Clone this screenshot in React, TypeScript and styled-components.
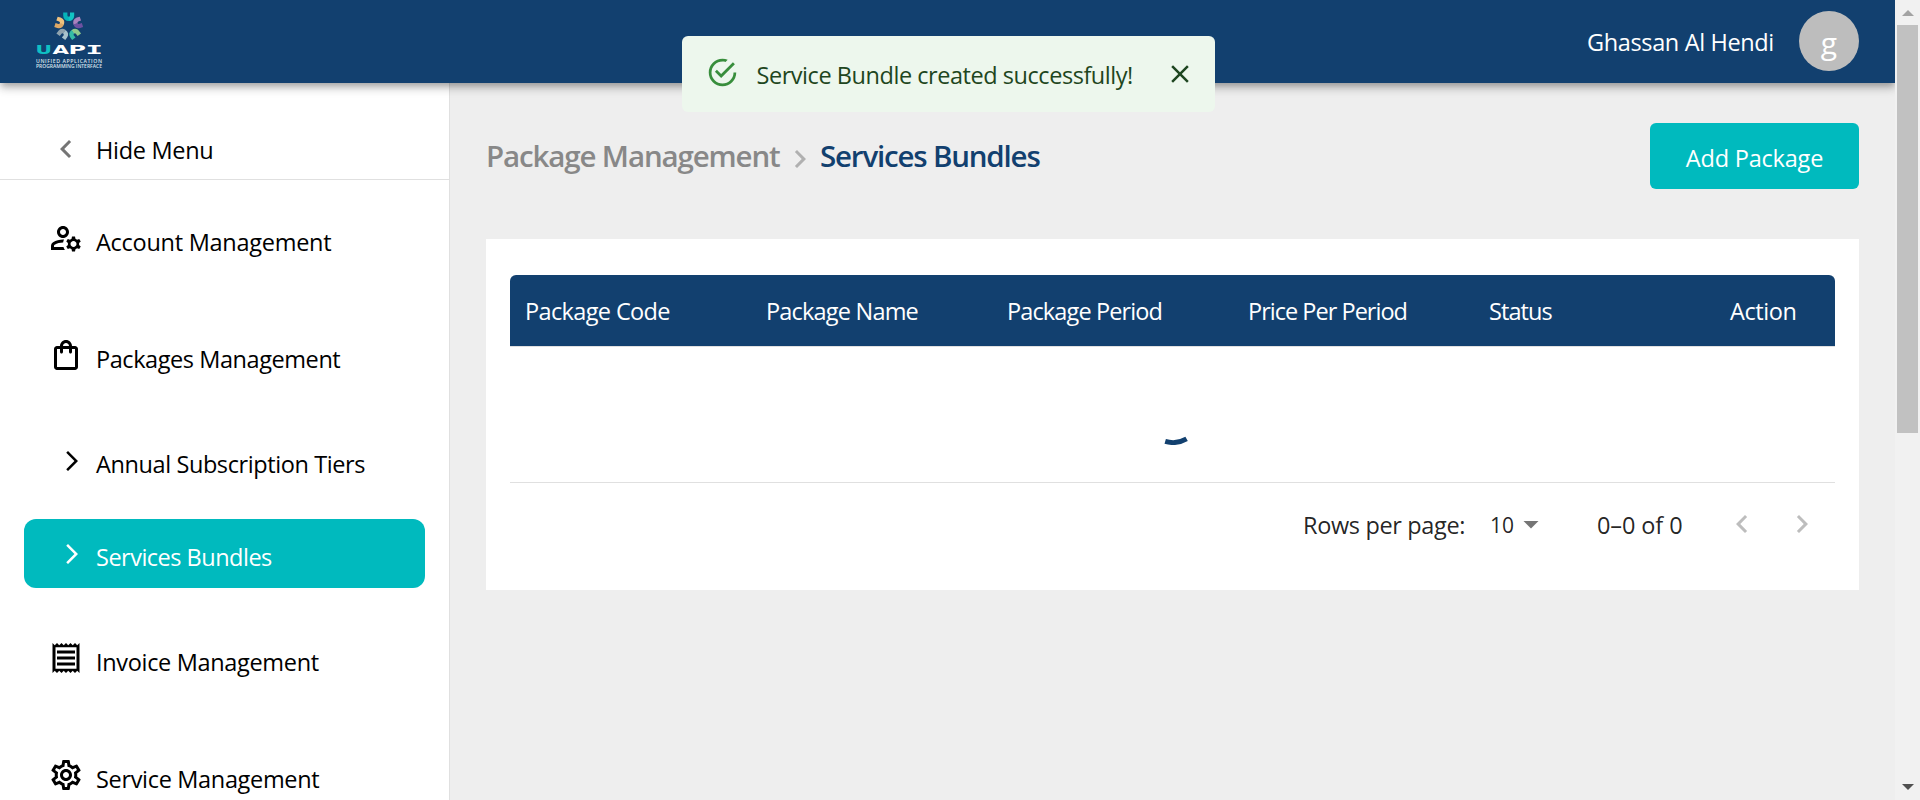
import React from "react";
import styled, { createGlobalStyle, css } from "styled-components";
import {
  MdChevronLeft,
  MdChevronRight,
  MdArrowForwardIos,
  MdArrowDropDown,
  MdClose,
  MdOutlineManageAccounts,
  MdOutlineShoppingBag,
  MdOutlineReceipt,
  MdOutlineSettings,
} from "react-icons/md";

const navy = "#12406f";
const teal = "#00babe";

const GlobalStyle = createGlobalStyle`
  *, *::before, *::after { box-sizing: border-box; }
  html, body { margin: 0; padding: 0; overflow: hidden; }
  body {
    font-family: "Open Sans", "Noto Sans", sans-serif;
    font-size: 23.5px;
    color: #000;
    background: #eee;
  }
  svg { display: block; flex: none; }
`;

const Label = styled.span<{ $track?: number }>`
  white-space: nowrap;
  letter-spacing: ${(p) => p.$track ?? -0.3}px;
`;

const Screen = styled.div`
  display: flex;
  width: 1920px;
  height: 800px;
  overflow: hidden;
`;

const Page = styled.div`
  position: relative;
  display: flex;
  flex-direction: column;
  width: 1895px;
  overflow: hidden;
`;

const Header = styled.header`
  position: relative;
  z-index: 1;
  display: flex;
  align-items: center;
  flex: none;
  height: 83px;
  padding: 0 36px 1px 35px;
  color: #fff;
  background: ${navy};
  box-shadow: 0 3px 6px -1.5px rgba(0, 0, 0, 0.2),
    0 6px 7.5px rgba(0, 0, 0, 0.14), 0 1.5px 15px rgba(0, 0, 0, 0.12);
`;

const UserBlock = styled.div`
  display: flex;
  align-items: center;
  margin-left: auto;
  width: 272px;
  justify-content: space-between;
`;

const UserName = styled(Label)`
  line-height: 34px;
  padding-top: 2px;
`;

const Avatar = styled.div`
  display: flex;
  align-items: center;
  justify-content: center;
  width: 60px;
  height: 60px;
  padding-top: 3px;
  border-radius: 50%;
  font-size: 30px;
  line-height: 45px;
  background: #bdbdbd;
`;

const Body = styled.div`
  display: flex;
  flex: 1;
  min-height: 0;
`;

const Sidebar = styled.nav`
  flex: none;
  width: 450px;
  overflow: hidden;
  background: #fff;
  border-right: 1px solid #e0e0e0;
`;

const HideMenu = styled.div`
  display: flex;
  align-items: center;
  height: 97px;
  padding: 36px 0 0 48px;
  border-bottom: 1px solid #e0e0e0;
  margin-bottom: 23px;

  svg { color: #757575; margin-right: 12px; }
  span { padding-top: 1px; }
`;

const NavItem = styled.div<{ $gap: number; $sub?: boolean; $active?: boolean }>`
  display: flex;
  align-items: center;
  height: 69px;
  margin: 0 24px ${(p) => p.$gap}px;
  padding-left: 24px;
  border-radius: 12px;

  svg {
    width: 36px;
    height: 36px;
    margin-right: 12px;
  }
  span { padding-top: 9px; }

  ${(p) =>
    p.$sub &&
    css`
      padding-left: 36px;
      svg { width: 24px; height: 24px; }
      span { padding-top: 7px; }
    `}
  ${(p) =>
    p.$active &&
    css`
      color: #fff;
      background: ${teal};
    `}
`;

const Main = styled.main`
  flex: 1;
  padding: 40px 36px 0;
  background: #eee;
`;

const TitleRow = styled.div`
  display: flex;
  align-items: center;
  justify-content: space-between;
  height: 66px;
`;

const Breadcrumb = styled.div`
  display: flex;
  align-items: center;
  font-size: 29.5px;
  font-weight: 600;
  line-height: 44px;

  svg { color: #b0b0b0; margin: 5px 2px 0 0; }
`;

const Crumb = styled(Label)<{ $current?: boolean }>`
  color: ${(p) => (p.$current ? navy : "#888")};
  width: ${(p) => (p.$current ? "auto" : "296px")};
`;

const AddButton = styled.button`
  width: 209px;
  height: 66px;
  padding: 3px 0 0;
  border: 0;
  border-radius: 6px;
  font: inherit;
  color: #fff;
  background: ${teal};
`;

const Card = styled.section`
  height: 351px;
  margin-top: 50px;
  padding: 36px 24px 0;
  background: #fff;
`;

const TableHead = styled.div`
  display: grid;
  grid-template-columns: repeat(5, 241px) 1fr;
  align-items: center;
  height: 71px;
  padding: 1px 0 0 15px;
  border-radius: 6px 6px 0 0;
  color: #fff;
  background: ${navy};
`;

const TableBody = styled.div`
  display: flex;
  align-items: center;
  justify-content: center;
  height: 137px;
  border-top: 1px solid #e0e0e0;
  border-bottom: 1px solid #e0e0e0;
`;

const Pagination = styled.div`
  display: flex;
  justify-content: flex-end;
  align-items: center;
  height: 84px;
  padding-right: 3px;
  color: rgba(0, 0, 0, 0.87);
`;

const RowsLabel = styled(Label)`
  width: 187px;
`;

const RowsSelect = styled.div`
  display: flex;
  align-items: center;
  width: 107px;
  font-size: 21px;

  span { width: 23px; }
  svg { color: #757575; margin-top: -3px; }
`;

const RangeLabel = styled(Label)`
  width: 115px;
`;

const PageButton = styled.div`
  display: flex;
  justify-content: center;
  width: 60px;
  margin-top: -3px;
  color: #bdbdbd;
`;

const Toast = styled.div`
  position: absolute;
  z-index: 2;
  top: 36px;
  left: 681.5px;
  display: flex;
  align-items: center;
  width: 533px;
  height: 75.5px;
  padding: 0 20px 0 24px;
  border-radius: 6px;
  color: #1e4620;
  background: #edf7ed;

  span { margin: 2px auto 0 18px; }
  svg:first-child { color: #388e3c; margin-top: -3px; }
`;

const Scrollbar = styled.div`
  display: flex;
  flex-direction: column;
  justify-content: space-between;
  align-items: center;
  width: 25px;
  padding: 10px 0;
  background: #f1f1f1;
`;

const Arrow = styled.i<{ $down?: boolean }>`
  width: 0;
  height: 0;
  border: 6px solid transparent;
  ${(p) =>
    p.$down
      ? "border-top-color:#505050;border-bottom-width:0;"
      : "border-bottom-color:#a3a3a3;border-top-width:0;"}
`;

const Thumb = styled.div`
  width: 21px;
  height: 408px;
  margin: 9px 0 auto;
  background: #c1c1c1;
`;

const petals = [
  ["#06b3b9", "#12c4c4"],
  ["#a982bd", "#6d51a1"],
  ["#8fca8b", "#35bca6"],
  ["#a8c3cc", "#8fa3ae"],
  ["#dda866", "#efc27f"],
];

const Logo = () => (
  <svg width="70" height="64" viewBox="0 0 70 64">
    <g fill="none" strokeWidth="4.2">
      {petals.map(([a, b], i) => (
        <g key={a} transform={`translate(33.7 17) rotate(${i * 72})`}>
          <path d="M-3.4-13.4V-10.4Q-3.2-7.2 .3-7.1" stroke={a} />
          <path d="M3.4-13.4V-10.4Q3.2-7.2 0-7.1" stroke={b} />
        </g>
      ))}
    </g>
    <g fontFamily="DejaVu Sans" fontWeight="700" fontSize="11.8" fill="#fff">
      <text x="0.5" y="44.5" fill="#0fc0c4" textLength="16.5" lengthAdjust="spacingAndGlyphs">U</text>
      <text x="17.5" y="44.5" textLength="16.5" lengthAdjust="spacingAndGlyphs">A</text>
      <text x="33.5" y="44.5" textLength="17.5" lengthAdjust="spacingAndGlyphs">P</text>
      <text x="50.5" y="44.5" fontFamily="DejaVu Sans Mono" textLength="17.5" lengthAdjust="spacingAndGlyphs">I</text>
    </g>
    <g fontFamily="Open Sans" fontWeight="600" fontSize="5.2" fill="#dbe4ec">
      <text x="1" y="53.7" textLength="66">UNIFIED APPLICATION</text>
      <text x="1" y="59.4" textLength="66" lengthAdjust="spacingAndGlyphs">PROGRAMMING INTERFACE</text>
    </g>
  </svg>
);

const SuccessIcon = () => (
  <svg width="33" height="33" viewBox="0 0 24 24" fill="currentColor">
    <path d="M20,12A8,8 0 0,1 12,20A8,8 0 0,1 4,12A8,8 0 0,1 12,4C12.76,4 13.5,4.11 14.2, 4.31L15.77,2.74C14.61,2.26 13.34,2 12,2A10,10 0 0,0 2,12A10,10 0 0,0 12,22A10,10 0 0, 0 22,12M7.91,10.08L6.5,11.5L11,16L21,6L19.59,4.58L11,13.17L7.91,10.08Z" />
  </svg>
);

const Spinner = () => (
  <svg width="60" height="60" viewBox="-30 -30 60 60">
    <path d="M13.6 23.9A27.5 27.5 0 0 1-7.8 26.4" fill="none" stroke={navy} strokeWidth="4.9" />
  </svg>
);

const columns: [string, number][] = [
  ["Package Code", -0.63],
  ["Package Name", -0.8],
  ["Package Period", -0.87],
  ["Price Per Period", -0.98],
  ["Status", -0.9],
  ["Action", -0.4],
];

export default function App() {
  return (
    <Screen>
      <GlobalStyle />
      <Page>
        <Header>
          <Logo />
          <UserBlock>
            <UserName $track={-0.36}>Ghassan Al Hendi</UserName>
            <Avatar>g</Avatar>
          </UserBlock>
        </Header>
        <Body>
          <Sidebar>
            <HideMenu>
              <MdChevronLeft size={36} />
              <Label $track={-0.3}>Hide Menu</Label>
            </HideMenu>
            <NavItem $gap={48}>
              <MdOutlineManageAccounts />
              <Label $track={-0.27}>Account Management</Label>
            </NavItem>
            <NavItem $gap={37}>
              <MdOutlineShoppingBag />
              <Label $track={-0.43}>Packages Management</Label>
            </NavItem>
            <NavItem $gap={24} $sub>
              <MdArrowForwardIos />
              <Label $track={-0.4}>Annual Subscription Tiers</Label>
            </NavItem>
            <NavItem $gap={35} $sub $active>
              <MdArrowForwardIos />
              <Label $track={-0.5}>Services Bundles</Label>
            </NavItem>
            <NavItem $gap={48}>
              <MdOutlineReceipt />
              <Label $track={-0.33}>Invoice Management</Label>
            </NavItem>
            <NavItem $gap={0}>
              <MdOutlineSettings />
              <Label $track={-0.33}>Service Management</Label>
            </NavItem>
          </Sidebar>
          <Main>
            <TitleRow>
              <Breadcrumb>
                <Crumb $track={-1.13}>Package Management</Crumb>
                <MdChevronRight size={36} />
                <Crumb $track={-1.18} $current>Services Bundles</Crumb>
              </Breadcrumb>
              <AddButton>
                <Label $track={-0.2}>Add Package</Label>
              </AddButton>
            </TitleRow>
            <Card>
              <TableHead>
                {columns.map(([name, track]) => (
                  <Label key={name} $track={track}>{name}</Label>
                ))}
              </TableHead>
              <TableBody>
                <Spinner />
              </TableBody>
              <Pagination>
                <RowsLabel $track={-0.35}>Rows per page:</RowsLabel>
                <RowsSelect>
                  <span>10</span>
                  <MdArrowDropDown size={36} />
                </RowsSelect>
                <RangeLabel $track={-0.1}>0–0 of 0</RangeLabel>
                <PageButton><MdChevronLeft size={36} /></PageButton>
                <PageButton><MdChevronRight size={36} /></PageButton>
              </Pagination>
            </Card>
          </Main>
        </Body>
        <Toast role="alert">
          <SuccessIcon />
          <Label $track={-0.45}>Service Bundle created successfully!</Label>
          <MdClose size={30} />
        </Toast>
      </Page>
      <Scrollbar>
        <Arrow />
        <Thumb />
        <Arrow $down />
      </Scrollbar>
    </Screen>
  );
}
